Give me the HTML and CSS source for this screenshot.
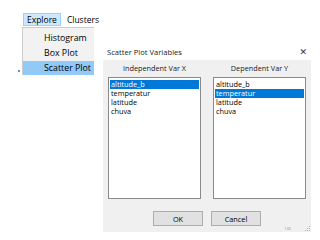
FILE: index.html
```html
<!DOCTYPE html>
<html>
<head>
<meta charset="utf-8">
<link rel="stylesheet" href="styles.css">
</head>
<body>
<div class="screen">
  <nav class="menubar">
    <span class="menu-item active">Explore</span>
    <span class="menu-item">Clusters</span>
  </nav>
  <ul class="dropdown">
    <li class="drop-item">Histogram</li>
    <li class="drop-item">Box Plot</li>
    <li class="drop-item selected">Scatter Plot</li>
  </ul>
  <span class="dot"></span>

  <section class="dialog">
    <header class="titlebar">
      <span class="title">Scatter Plot Variables</span>
      <span class="close">✕</span>
    </header>
    <div class="body">
      <div class="columns">
        <div class="column">
          <div class="heading">Independent Var X</div>
          <ul class="listbox">
            <li class="row sel">altitude_b</li>
            <li class="row">temperatur</li>
            <li class="row">latitude</li>
            <li class="row">chuva</li>
          </ul>
        </div>
        <div class="column">
          <div class="heading">Dependent Var Y</div>
          <ul class="listbox">
            <li class="row">altitude_b</li>
            <li class="row sel">temperatur</li>
            <li class="row">latitude</li>
            <li class="row">chuva</li>
          </ul>
        </div>
      </div>
      <div class="buttons">
        <button class="btn">OK</button>
        <button class="btn">Cancel</button>
      </div>
      <div class="footer">
        <span class="tiny">136</span>
        <svg class="grip" width="5" height="5" viewBox="0 0 5 5">
          <rect x="4" y="0" width="1" height="1" fill="#b0b0b0"/>
          <rect x="2" y="2" width="1" height="1" fill="#b0b0b0"/>
          <rect x="4" y="2" width="1" height="1" fill="#b0b0b0"/>
          <rect x="0" y="4" width="1" height="1" fill="#b0b0b0"/>
          <rect x="2" y="4" width="1" height="1" fill="#b0b0b0"/>
          <rect x="4" y="4" width="1" height="1" fill="#b0b0b0"/>
        </svg>
      </div>
    </div>
  </section>
</div>
</body>
</html>
```

FILE: styles.css
```css
* { box-sizing: border-box; }
html, body { margin: 0; padding: 0; background: #fff; }
body { font-family: "Open Sans", "Noto Sans", sans-serif; color: #000; }
.screen { position: relative; width: 320px; height: 240px; overflow: hidden; }

.menubar {
  display: flex;
  gap: 2px;
  padding: 13px 0 0 23px;
  font-size: 8.5px;
}
.menu-item {
  height: 13px;
  line-height: 12px;
  padding: 0 3px;
  border: 1px solid transparent;
}
.menu-item.active { background: #cce8ff; border-color: #99d1ff; }

.dropdown {
  position: absolute;
  left: 22px;
  top: 27px;
  width: 72px;
  margin: 0;
  padding: 2px 0 0;
  list-style: none;
  background: #f2f2f2;
  border-top: 1px solid #ccc;
  border-left: 1px solid #ccc;
  font-size: 8.8px;
}
.drop-item { height: 14px; line-height: 14px; padding-left: 21px; margin-top: 1px; }
.drop-item.selected { background: #91c9f7; }

.dot {
  position: absolute;
  left: 18px;
  top: 70px;
  width: 2px;
  height: 2px;
  background: #7a8ba0;
}

.dialog {
  position: absolute;
  left: 103px;
  top: 44px;
  width: 208px;
  height: 188px;
  display: flex;
  flex-direction: column;
  font-size: 7.3px;
}
.titlebar {
  height: 18px;
  background: #fff;
  display: flex;
  align-items: center;
  justify-content: space-between;
  padding: 0 4px 0 4px;
}
.title { font-size: 7.6px; color: #222; }
.close { font-size: 9px; color: #333; font-family: "DejaVu Sans", sans-serif; }

.body {
  flex: 1;
  background: #f0f0f0;
  display: flex;
  flex-direction: column;
  padding: 4px 5px 0;
}
.columns { display: flex; gap: 12px; }
.column { width: 93px; display: flex; flex-direction: column; }
.heading { text-align: center; line-height: 9px; height: 9px; color: #222; margin-bottom: 4px; }
.listbox {
  margin: 0;
  padding: 2px 1px 0;
  list-style: none;
  height: 122px;
  background: #fff;
  border: 1px solid #8a8a8a;
}
.row { height: 9px; line-height: 9px; padding-left: 1px; }
.row.sel { background: #0078d7; color: #fff; }

.buttons {
  display: flex;
  justify-content: center;
  gap: 8px;
  margin-top: 12px;
}
.btn {
  width: 50px;
  height: 15px;
  padding: 0;
  background: #e1e1e1;
  border: 1px solid #adadad;
  font-family: inherit;
  font-size: 7.3px;
  color: #000;
}
.footer {
  flex: 1;
  display: flex;
  justify-content: flex-end;
  align-items: flex-end;
  gap: 14px;
  padding-bottom: 1px;
}
.tiny { font-size: 4px; color: #999; line-height: 5px; }
.grip { display: block; margin-right: -4px; }
```
